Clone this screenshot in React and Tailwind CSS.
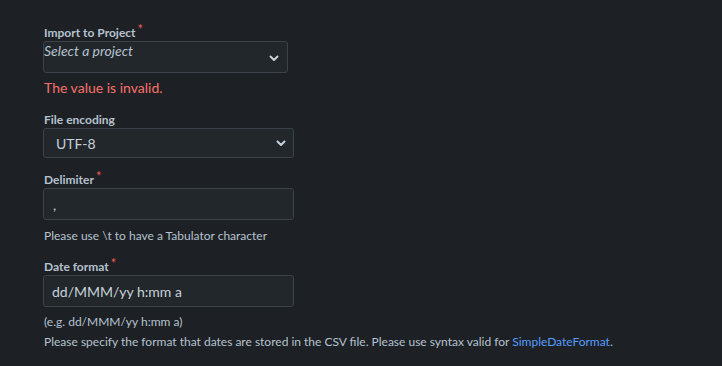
import React from 'react';

function Chevron() {
  return (
    <svg width="10" height="7" viewBox="0 0 10 7" className="shrink-0">
      <path d="M1.5 1.5L5 5l3.5-3.5" fill="none" stroke="#c7d1db" strokeWidth="2" strokeLinecap="round" strokeLinejoin="round" />
    </svg>
  );
}

function Label({ children, required }) {
  return (
    <div className="flex items-start text-[12px] font-bold leading-[16px] text-[#b6c2cf]">
      <span>{children}</span>
      {required && <span className="ml-[2px] -mt-[4px] text-[13px] font-normal text-[#f15b50]">*</span>}
    </div>
  );
}

export default function App() {
  return (
    <div
      className="w-[722px] h-[366px] bg-[#1d2125] text-[#b6c2cf] pl-[44px] pt-[25px]"
      style={{ fontFamily: 'Lato, "Noto Sans", sans-serif' }}
    >
      {/* Import to Project */}
      <Label required>Import to Project</Label>
      <div className="ml-[-1px] w-[245px] h-[32px] bg-[#22272b] border border-[#3b4249] rounded-[3px] flex justify-between">
        <span className="italic text-[14px] leading-[18px] text-[#b6c2cf]">Select a project</span>
        <span className="pr-[8px] pt-[13px]"><Chevron /></span>
      </div>
      <p className="mt-[6px] text-[14px] leading-[18px] text-[#f87168]">The value is invalid.</p>

      {/* File encoding */}
      <div className="mt-[15px]"><Label>File encoding</Label></div>
      <div className="ml-[-1px] w-[251px] h-[30px] bg-[#22272b] border border-[#3b4249] rounded-[3px] flex items-center justify-between pl-[12px] pr-[7px]">
        <span className="text-[14px] text-[#c7d1db]">UTF-8</span>
        <Chevron />
      </div>

      {/* Delimiter */}
      <div className="mt-[14px]"><Label required>Delimiter</Label></div>
      <div className="ml-[-1px] w-[251px] h-[32px] bg-[#22272b] border border-[#3b4249] rounded-[3px] flex items-center pl-[9px]">
        <span className="text-[14px] text-[#c7d1db]">,</span>
      </div>
      <p className="mt-[8px] text-[12px] leading-[16px]">Please use \t to have a Tabulator character</p>

      {/* Date format */}
      <div className="mt-[15px]"><Label required>Date format</Label></div>
      <div className="ml-[-1px] w-[251px] h-[32px] bg-[#22272b] border border-[#3b4249] rounded-[3px] flex items-center pl-[8px]">
        <span className="text-[14px] text-[#c7d1db]">dd/MMM/yy h:mm a</span>
      </div>
      <p className="mt-[7px] text-[12px] leading-[16px]">(e.g. dd/MMM/yy h:mm a)</p>
      <p className="mt-[4px] text-[12px] leading-[16px]">
        Please specify the format that dates are stored in the CSV file. Please use syntax valid for{' '}
        <a className="text-[#579dff]">SimpleDateFormat</a>.
      </p>
    </div>
  );
}
